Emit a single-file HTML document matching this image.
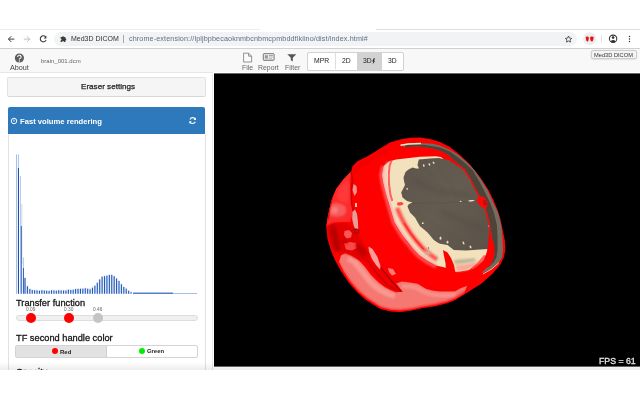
<!DOCTYPE html>
<html>
<head>
<meta charset="utf-8">
<style>
html,body{margin:0;padding:0;}
body{width:640px;height:400px;overflow:hidden;background:#fff;font-family:"Liberation Sans",sans-serif;position:relative;color:#222;}
.abs{position:absolute;}
.t{position:absolute;white-space:nowrap;line-height:1;will-change:transform;}
#topline{left:376px;top:29px;width:264px;height:1px;background:#dedede;}
#topline2{left:0;top:29px;width:260px;height:1px;background:#ececec;}
#chrome{left:0;top:30px;width:640px;height:18px;background:#fff;}
#chromeline{left:0;top:48px;width:640px;height:1px;background:#d0d0d0;}
#omni{left:54px;top:32px;width:523px;height:14px;border-radius:7px;background:#f1f3f4;}
#toolbar{left:0;top:49px;width:640px;height:23px;background:#f8f8f8;}
#toolbarline{left:0;top:72px;width:213px;height:1px;background:#e6e6e6;}
#view{left:214px;top:73px;width:426px;height:294px;background:#000;border-top:1px solid #666;border-bottom:1px solid #666;box-sizing:border-box;}
#leftborder{left:212px;top:74px;width:1px;height:296px;background:#e8e8e8;}
#bottomline{left:0;top:362px;width:640px;height:7.5px;background:linear-gradient(rgba(0,0,0,0),rgba(0,0,0,0.07));}
#bottomwhite{left:0;top:369.5px;width:640px;height:31px;background:#fff;}
#eraser{left:7px;top:77px;width:197px;height:18px;border:1px solid #e2e2e2;border-bottom-color:#d8d8d8;border-radius:2px;background:#f5f5f5;}
#phead{left:8px;top:107px;width:197px;height:27px;background:#2e79bc;border-radius:2px 2px 0 0;}
#pbody{left:8px;top:134px;width:196px;height:240px;border-left:1px solid #e2e2e2;border-right:1px solid #e2e2e2;background:#fff;}
#btngrp{left:307px;top:52px;width:94.5px;height:16.5px;border:1px solid #d2d2d2;border-radius:2px;background:#fff;}
#btnact{left:356.5px;top:52.5px;width:25px;height:17px;background:#d2d2d2;}
.vsep{position:absolute;width:1px;background:#ccc;}
#track{left:16px;top:315px;width:180px;height:4px;border:1px solid #ddd;border-radius:3px;background:#f0f0f0;}
.hd{position:absolute;width:10px;height:10px;border-radius:5px;}
#tfgrp{left:15px;top:345px;width:181px;height:11px;border:1px solid #d4d4d4;border-radius:2px;background:#fff;}
#tfact{left:16px;top:346px;width:90px;height:11px;background:#e2e2e2;border-right:1px solid #d0d0d0;}
</style>
</head>
<body>
<!-- browser chrome -->
<div class="abs" id="topline"></div>
<div class="abs" id="topline2"></div>
<div class="abs" id="chrome"></div>
<div class="abs" id="omni"></div>
<div class="abs" id="chromeline"></div>
<svg class="abs" id="chromeicons" style="left:0;top:29px" width="640" height="20" viewBox="0 0 640 20">
<g fill="none" stroke="#333" stroke-width="0.95" stroke-linecap="butt" stroke-linejoin="miter">
<path d="M14.4 10.1H8.6M11.3 7.2L8.4 10.1L11.3 13"/>
<path d="M23.8 10.1H29.6M26.9 7.2L29.8 10.1L26.9 13" stroke="#bdbdbd"/>
<path d="M45.6 7.9A3 3 0 1 0 46.1 10.9" stroke-width="1.05"/>
</g>
<path d="M46.4 6.7V9.4H43.7Z" fill="#333"/>
<!-- puzzle -->
<path d="M60.6 8.1h1.5a0.9 0.9 0 0 1 1.8 0h1.5v1.5a0.9 0.9 0 0 1 0 1.8v1.5h-1.5a0.9 0.9 0 0 0 -1.8 0h-1.5v-1.5a0.9 0.9 0 0 0 0 -1.8z" fill="#3c3c3c"/>
<!-- star -->
<path d="M568.5 7l0.95 2.1 2.3 0.25-1.7 1.55 0.45 2.25-2-1.15-2 1.15 0.45-2.25-1.7-1.55 2.3-0.25z" fill="none" stroke="#3a3a3a" stroke-width="0.8" stroke-linejoin="miter"/>
<!-- ext icon -->
<circle cx="589.7" cy="9.8" r="6.45" fill="#ededed"/>
<path d="M585.7 8.3q0.2-0.9 1.6-0.8q1.5 0.1 1.5 1.2l-0.3 2.6q-0.3 1.3-1.2 1.2q-0.9-0.1-1.2-1.4z" fill="#e81010"/>
<path d="M590 8.6q0.1-1.1 1.7-1.1q1.8 0 2 1l-0.5 2.4q-0.4 1.6-1.5 1.6q-1 0-1.3-1.4z" fill="#e81010"/>
<rect x="601.2" y="6.2" width="0.8" height="7.2" fill="#dadada"/>
<!-- account -->
<circle cx="613.1" cy="9.8" r="3.7" fill="none" stroke="#333" stroke-width="1.05"/>
<circle cx="613.1" cy="8.6" r="1.3" fill="#333"/>
<path d="M610.5 12.2q2.6-2.3 5.2 0q-2.6 2.4-5.2 0z" fill="#333"/>
<!-- menu -->
<circle cx="629.5" cy="7.4" r="0.75" fill="#333"/><circle cx="629.5" cy="9.9" r="0.75" fill="#333"/><circle cx="629.5" cy="12.4" r="0.75" fill="#333"/>
</svg>
<div class="t" id="sitename" style="left:71px;top:35.32px;font-size:7px;color:#333;">Med3D DICOM</div>
<div class="abs" style="left:123px;top:35px;width:1px;height:8px;background:#aaa;"></div>
<div class="t" id="url" style="left:129px;top:35.16px;font-size:7.2px;letter-spacing:0.123px;color:#5f6f88;">chrome-extension://lpljbpbecaoknmbcnbmcpmbddfikiino/dist/index.html#</div>

<!-- app toolbar -->
<div class="abs" id="toolbar"></div>
<div class="abs" id="toolbarline"></div>
<div class="t" id="about" style="left:10.3px;top:63.61px;font-size:7.2px;color:#444;">About</div>
<div class="t" id="fname" style="left:41.3px;top:58.02px;font-size:6px;color:#666;">brain_001.dcm</div>
<div class="t" id="lfile" style="left:242.2px;top:64.76px;font-size:6.9px;color:#666;">File</div>
<div class="t" id="lreport" style="left:258.4px;top:64.76px;font-size:6.9px;color:#666;">Report</div>
<div class="t" id="lfilter" style="left:284.7px;top:64.76px;font-size:6.9px;color:#666;">Filter</div>
<div class="abs" id="btngrp"></div>
<div class="abs" id="btnact"></div>
<div class="vsep" style="left:335px;top:53px;height:16px;background:#ddd"></div>
<div class="t" id="bmpr" style="left:313.7px;top:58.34px;font-size:6.8px;color:#222;">MPR</div>
<div class="t" id="b2d" style="left:341.8px;top:58.34px;font-size:6.8px;color:#222;">2D</div>
<div class="t" id="b3df" style="left:362.7px;top:58.34px;font-size:6.8px;color:#222;">3D</div>
<div class="t" id="b3d" style="left:387.7px;top:58.34px;font-size:6.8px;color:#222;">3D</div>
<svg class="abs" id="tbicons" style="left:0;top:49px" width="640" height="25" viewBox="0 0 640 25">
<!-- about -->
<circle cx="19.4" cy="9" r="4.6" fill="#5e5e5e"/>
<path d="M17.7 7.9a1.7 1.6 0 1 1 2.6 1.3q-0.9 0.5-0.9 1.3" fill="none" stroke="#f8f8f8" stroke-width="1.15"/>
<circle cx="19.4" cy="12" r="0.65" fill="#f8f8f8"/>
<!-- file -->
<path d="M243.6 4.2h5l3 3v5.8h-8z" fill="#fbfbfb" stroke="#777" stroke-width="0.8" stroke-linejoin="round"/>
<path d="M248.6 4.2v3h3" fill="none" stroke="#777" stroke-width="0.8" stroke-linejoin="round"/>
<!-- report -->
<rect x="263.3" y="4.7" width="10.8" height="6.6" rx="0.6" fill="#f2f2f2" stroke="#666" stroke-width="0.9"/>
<rect x="264.8" y="6.2" width="3.1" height="3.4" fill="#999"/>
<rect x="268.9" y="6.3" width="4" height="0.8" fill="#888"/>
<rect x="268.9" y="7.7" width="4" height="0.7" fill="#aaa"/>
<rect x="268.9" y="9" width="3" height="0.7" fill="#aaa"/>
<rect x="264.6" y="10.2" width="8.4" height="0.5" fill="#bbb"/>
<!-- filter -->
<path d="M287.3 5.2h9l-3.5 3.6v3.6l-2-1.2v-2.4z" fill="#555"/>
<!-- bolt -->
<path d="M373.8 9.3l-1.6 3.2h1.2l-0.9 2.9 2.6-3.7h-1.3l1.3-2.4z" fill="#222"/>
</svg>
<!-- tooltip -->
<div class="abs" id="tip" style="left:591px;top:50px;width:44px;height:7px;border:1px solid #cdcdcd;border-radius:2px;background:#f4f4f4;box-shadow:0 0.5px 1.5px rgba(0,0,0,0.15);"></div>
<div class="t" id="tiptext" style="left:594px;top:52.87px;font-size:5.7px;color:#333;">Med3D DICOM</div>

<!-- left panel -->
<div class="abs" id="leftborder"></div>
<div class="abs" id="eraser"></div>
<div class="t" id="erasertext" style="left:80.5px;top:83.44px;font-size:8.1px;color:#222;-webkit-text-stroke:0.25px #222;">Eraser settings</div>
<div class="abs" id="pbody"></div>
<div class="abs" id="phead"></div>
<div class="t" id="pheadtext" style="left:20px;top:118.12px;font-size:7.65px;color:#fff;font-weight:bold;">Fast volume rendering</div>
<svg class="abs" id="hicons" style="left:8px;top:107px" width="197" height="27" viewBox="8 107 197 27">
<circle cx="14" cy="121" r="2.75" fill="none" stroke="#fff" stroke-width="0.95"/>
<path d="M14 119.6v1.9" stroke="#fff" stroke-width="1" fill="none"/>
<path d="M195.4 119.3A3 3 0 0 0 190 119.4" fill="none" stroke="#fff" stroke-width="1.1"/>
<path d="M189.9 121.9A3 3 0 0 0 195.3 121.8" fill="none" stroke="#fff" stroke-width="1.1"/>
<path d="M196 117.4v2.5h-2.5z" fill="#fff"/>
<path d="M189.3 123.8v-2.5h2.5z" fill="#fff"/>
</svg>
<svg class="abs" id="hist" style="left:8px;top:140px" width="200" height="160" viewBox="0 0 200 160">
<rect x="8.00" y="14.40" width="1.0" height="139.40" fill="#a9c0e6"/>
<rect x="9.90" y="14.40" width="1.0" height="13.60" fill="#a9c0e6"/>
<rect x="9.90" y="28.00" width="1.1" height="125.80" fill="#1d50b4"/>
<rect x="11.90" y="36.00" width="1.0" height="50.00" fill="#b4c6e4"/>
<rect x="13.40" y="64.00" width="0.9" height="60.00" fill="#c8d6ec"/>
<rect x="12.60" y="86.00" width="1.1" height="67.80" fill="#1d50b4"/>
<rect x="14.90" y="117.50" width="1.0" height="10.50" fill="#b4c6e4"/>
<rect x="14.90" y="128.00" width="1.0" height="25.80" fill="#2358b8"/>
<path d="M16.00 137.20h2.0V153.80h-2.0zM18.41 145.48h2.0V153.80h-2.0zM20.82 148.17h2.0V153.80h-2.0zM23.23 149.23h2.0V153.80h-2.0zM25.64 149.33h2.0V153.80h-2.0zM28.05 149.67h2.0V153.80h-2.0zM30.46 150.02h2.0V153.80h-2.0zM32.87 149.44h2.0V153.80h-2.0zM35.28 149.68h2.0V153.80h-2.0zM37.69 149.92h2.0V153.80h-2.0zM40.10 150.16h2.0V153.80h-2.0zM42.51 149.56h2.0V153.80h-2.0zM44.92 149.80h2.0V153.80h-2.0zM47.33 150.04h2.0V153.80h-2.0zM49.74 149.44h2.0V153.80h-2.0zM52.15 149.61h2.0V153.80h-2.0zM54.56 149.71h2.0V153.80h-2.0zM56.97 149.80h2.0V153.80h-2.0zM59.38 149.06h2.0V153.80h-2.0zM61.79 149.11h2.0V153.80h-2.0zM64.20 149.07h2.0V153.80h-2.0zM66.61 148.19h2.0V153.80h-2.0zM69.02 148.09h2.0V153.80h-2.0zM71.43 147.99h2.0V153.80h-2.0zM73.84 147.88h2.0V153.80h-2.0zM76.25 147.46h2.0V153.80h-2.0zM78.66 147.91h2.0V153.80h-2.0zM81.07 148.36h2.0V153.80h-2.0zM83.48 146.87h2.0V153.80h-2.0zM85.89 144.92h2.0V153.80h-2.0zM88.30 142.01h2.0V153.80h-2.0zM90.71 138.71h2.0V153.80h-2.0zM93.12 136.03h2.0V153.80h-2.0zM95.53 135.33h2.0V153.80h-2.0zM97.94 135.07h2.0V153.80h-2.0zM100.35 134.17h2.0V153.80h-2.0zM102.76 134.11h2.0V153.80h-2.0zM105.17 135.53h2.0V153.80h-2.0zM107.58 137.80h2.0V153.80h-2.0zM109.99 140.26h2.0V153.80h-2.0zM112.40 143.57h2.0V153.80h-2.0zM114.81 146.29h2.0V153.80h-2.0zM117.22 147.86h2.0V153.80h-2.0zM119.63 149.89h2.0V153.80h-2.0zM122.04 151.34h2.0V153.80h-2.0z" fill="#c9d8f0" opacity="0.55"/>
<path d="M16.45 138.00h1.1V153.80h-1.1zM18.86 146.28h1.1V153.80h-1.1zM21.27 148.97h1.1V153.80h-1.1zM23.68 150.03h1.1V153.80h-1.1zM26.09 150.13h1.1V153.80h-1.1zM28.50 150.47h1.1V153.80h-1.1zM30.91 150.82h1.1V153.80h-1.1zM33.32 150.24h1.1V153.80h-1.1zM35.73 150.48h1.1V153.80h-1.1zM38.14 150.72h1.1V153.80h-1.1zM40.55 150.96h1.1V153.80h-1.1zM42.96 150.36h1.1V153.80h-1.1zM45.37 150.60h1.1V153.80h-1.1zM47.78 150.84h1.1V153.80h-1.1zM50.19 150.24h1.1V153.80h-1.1zM52.60 150.41h1.1V153.80h-1.1zM55.01 150.51h1.1V153.80h-1.1zM57.42 150.60h1.1V153.80h-1.1zM59.83 149.86h1.1V153.80h-1.1zM62.24 149.91h1.1V153.80h-1.1zM64.65 149.87h1.1V153.80h-1.1zM67.06 148.99h1.1V153.80h-1.1zM69.47 148.89h1.1V153.80h-1.1zM71.88 148.79h1.1V153.80h-1.1zM74.29 148.68h1.1V153.80h-1.1zM76.70 148.26h1.1V153.80h-1.1zM79.11 148.71h1.1V153.80h-1.1zM81.52 149.16h1.1V153.80h-1.1zM83.93 147.67h1.1V153.80h-1.1zM86.34 145.72h1.1V153.80h-1.1zM88.75 142.81h1.1V153.80h-1.1zM91.16 139.51h1.1V153.80h-1.1zM93.57 136.83h1.1V153.80h-1.1zM95.98 136.13h1.1V153.80h-1.1zM98.39 135.87h1.1V153.80h-1.1zM100.80 134.97h1.1V153.80h-1.1zM103.21 134.91h1.1V153.80h-1.1zM105.62 136.33h1.1V153.80h-1.1zM108.03 138.60h1.1V153.80h-1.1zM110.44 141.06h1.1V153.80h-1.1zM112.85 144.37h1.1V153.80h-1.1zM115.26 147.09h1.1V153.80h-1.1zM117.67 148.66h1.1V153.80h-1.1zM120.08 150.69h1.1V153.80h-1.1zM122.49 152.14h1.1V153.80h-1.1z" fill="#2259b9"/>
<rect x="125" y="152.60" width="40" height="1.2" fill="#2a60bd"/>
<rect x="165" y="153.00" width="24" height="0.8" fill="#8fb0e0"/>
</svg>
<div class="t" id="tflabel" style="left:16px;top:298.87px;font-size:9.25px;color:#151515;-webkit-text-stroke:0.3px #151515;">Transfer function</div>
<div class="t" style="left:26px;top:308.2px;font-size:4.8px;color:#666;">0.09</div>
<div class="t" style="left:64.3px;top:308.2px;font-size:4.8px;color:#666;">0.30</div>
<div class="t" style="left:93.2px;top:308.2px;font-size:4.8px;color:#666;">0.46</div>
<div class="abs" id="track"></div>
<div class="hd" style="left:26px;top:313px;background:#f00;"></div>
<div class="hd" style="left:64px;top:313px;background:#f00;"></div>
<div class="hd" style="left:93px;top:313px;background:#c4c4c4;"></div>
<div class="t" id="tf2label" style="left:16px;top:333.97px;font-size:9.25px;color:#151515;-webkit-text-stroke:0.3px #151515;">TF second handle color</div>
<div class="abs" id="tfgrp"></div>
<div class="abs" id="tfact"></div>
<div class="abs" style="left:51.5px;top:348px;width:6px;height:6px;border-radius:3px;background:#f00;"></div>
<div class="t" id="redtxt" style="left:59.7px;top:348.62px;font-size:6px;font-weight:bold;color:#222;">Red</div>
<div class="abs" style="left:139px;top:348px;width:6px;height:6px;border-radius:3px;background:#0e0;"></div>
<div class="t" id="greentxt" style="left:147.3px;top:349.21px;font-size:5.9px;font-weight:bold;color:#222;">Green</div>
<div class="t" id="opac" style="left:16px;top:367.6px;font-size:9.25px;color:#151515;-webkit-text-stroke:0.3px #151515;">Opacity</div>

<!-- 3d view -->
<div class="abs" id="view"></div>
<svg class="abs" id="brain" style="left:214px;top:74px" width="426" height="293" viewBox="214 74 426 293">
<defs>
<filter id="b1" x="-20%" y="-20%" width="140%" height="140%"><feGaussianBlur stdDeviation="0.6"/></filter>
<filter id="b2" x="-20%" y="-20%" width="140%" height="140%"><feGaussianBlur stdDeviation="1.2"/></filter>
<filter id="b3" x="-20%" y="-20%" width="140%" height="140%"><feGaussianBlur stdDeviation="2.2"/></filter>
<clipPath id="sil"><path d="M400 139.4L410 137.8L420 137.5L430 139L440 142L450 147L460 155L470 164.5L476 172L482 180L488.5 190L493.5 200L497.5 210L500 217.5L502.5 228.8L505 241.2L505.3 250L503.8 257.5L500 265L492.5 273.8L481.2 283.8L471.2 290L461.2 296.2L455 300L447.5 303.1L435 306.2L422.5 308.1L411.2 310.6L400 311.9L390 311.2L380 308.8L366.2 300L357.5 292.5L348.8 282.5L341.2 271.2L335 260L331.2 251.2L327.5 238.8L326.2 226.2L327.5 218L329.4 208.8L331.9 198.8L336.2 188.8L343.8 178.8L351.2 171.2L352.5 166.2L357.5 161.2L366.2 156.9L373.8 152.5L382.5 146.9L390 142.5Z"/></clipPath>
<linearGradient id="faceg" x1="0" y1="0" x2="1" y2="1">
<stop offset="0" stop-color="#5d554b"/><stop offset="0.5" stop-color="#645c51"/><stop offset="1" stop-color="#5a5248"/>
</linearGradient>
</defs>
<!-- silhouette -->
<path id="silp" fill="#fe0000" d="M400 139.4L410 137.8L420 137.5L430 139L440 142L450 147L460 155L470 164.5L476 172L482 180L488.5 190L493.5 200L497.5 210L500 217.5L502.5 228.8L505 241.2L505.3 250L503.8 257.5L500 265L492.5 273.8L481.2 283.8L471.2 290L461.2 296.2L455 300L447.5 303.1L435 306.2L422.5 308.1L411.2 310.6L400 311.9L390 311.2L380 308.8L366.2 300L357.5 292.5L348.8 282.5L341.2 271.2L335 260L331.2 251.2L327.5 238.8L326.2 226.2L327.5 218L329.4 208.8L331.9 198.8L336.2 188.8L343.8 178.8L351.2 171.2L352.5 166.2L357.5 161.2L366.2 156.9L373.8 152.5L382.5 146.9L390 142.5Z"/>
<g clip-path="url(#sil)">
<!-- salmon crescent bottom -->
<path fill="#f57872" filter="url(#b1)" d="M345.5 253L352 256L359 260.5L365 267L371 275L378 282L384.5 287L390 290L395.6 292.5L402 291.5L398 287L395.6 283.8L402 281.6L410 282.5L417.5 283.8L422 286.5L426.2 289L432 290.5L439.4 291.4L447 291.6L454.7 291.4L461 288L467 286L464 294L455 299L447 302L435 305L422 307L411 309.5L400 310.5L390 309.8L381 307.5L367.5 299L358.5 291.5L350 281.5L343 270.5L339 262L341 255.5Z"/>
<path fill="none" stroke="#fa9e96" stroke-width="6" filter="url(#b2)" opacity="0.85" d="M348 258L354.5 262L360 268.5L365.5 276L372 283.5L379.5 289.5L387 293.5L395 296"/>
<path fill="none" stroke="#f99690" stroke-width="4.5" filter="url(#b2)" opacity="0.8" d="M402 286L410 286.5L417.5 288L424 292L432 294.5L440 295.5L448 295.5L456 294.5"/>
<path fill="none" stroke="#fe0000" stroke-width="4.5" filter="url(#b2)" opacity="0.75" d="M335 260L341.2 271.2L348.8 282.5L357.5 292.5L366.2 300L380 308.8L390 311.2L400 311.9L411.2 310.6L422.5 308.1L435 306.2L447.5 303.1L455 300L461.2 296.2L471.2 290"/>
<!-- dark red wedge between -->
<path fill="#ee0000" filter="url(#b1)" d="M364 252L373 262L381 268L389 276L397 284.5L403 292L396 291L388 288L381 282.5L374 275L367 266L361 258Z"/>
<path fill="none" stroke="#a40808" stroke-width="1.3" filter="url(#b1)" opacity="0.85" d="M377 263L384 271.5L392 281.5L401 291.5"/>
<path fill="none" stroke="#c00000" stroke-width="1.2" filter="url(#b1)" opacity="0.8" d="M366 258L372 267L380 277L388 285L396 290"/>
<!-- pink wedge -->
<path fill="#fa9c98" filter="url(#b1)" d="M368.5 246.5L372.5 249L377.5 257L380.5 266L380 269.5L376 265L372 259L369 252Z"/>
<path fill="#f77" filter="url(#b1)" d="M388 268L393 269L396 274L392 275.5L389 272Z"/>
<!-- left ear region shading -->
<path fill="#ff2b2b" filter="url(#b1)" d="M351 171L343.8 178.8L336.2 188.8L331.9 198.8L329.4 208.8L327.5 218L326.5 226L334 223L342 222L350 222L353.5 212L351.5 200L350 186L350.5 176Z"/>
<path fill="#f26464" filter="url(#b2)" opacity="0.9" d="M330 206L334 203L340 203.5L345 206L346.5 211L344 215.5L337 217L330.5 216L328.8 211Z"/>
<path fill="#f88" filter="url(#b2)" opacity="0.7" d="M331.5 208L336 206.5L338.5 209L337 213L332 213.5Z"/>
<path fill="#f44" filter="url(#b2)" opacity="0.6" d="M338 190L344 183L348.5 180L349 192L348 203L342 202L337 198Z"/>
<path fill="none" stroke="#c40000" stroke-width="1.5" filter="url(#b1)" opacity="0.9" d="M351 172L352.6 180L351.2 192L351.6 204L353.5 212"/>
<path fill="#e00000" filter="url(#b1)" opacity="0.9" d="M327 212L329 206L331.5 198L335 190L332.5 200L330.5 208L329 218L327.5 222Z"/>
<path fill="#f5908c" filter="url(#b1)" d="M353.5 184L356.5 186L357 192L354.5 196L352.5 190Z"/>
<path fill="#fba" filter="url(#b1)" d="M355 203L357 203L357 207L355 207Z"/>
<path fill="#e89e98" filter="url(#b1)" d="M352.5 212L355 209.5L357 214L358 222L358.2 229L356 231.5L353.8 226L352.2 219Z"/>
<!-- lower-left folds -->
<path fill="#e20000" filter="url(#b2)" d="M326.5 226L334 223L344 223L352 226L358 234L364 244L370 256L364 262L356 258L348 254L340 252L333 252L329 242Z"/>
<path fill="#b40000" filter="url(#b2)" opacity="0.85" d="M331 224L335 226L338 236L340 246L339.5 254L335 250L332 240L330 232Z"/>
<path fill="#f66" filter="url(#b1)" opacity="0.85" d="M344.5 231L349 230L352 233L351 237.5L346.5 238.5L344 235Z"/>
<path fill="#f55" filter="url(#b1)" opacity="0.85" d="M344 243.5L350 242L356 243L357 248L352 250.5L346 249.5Z"/>
<path fill="#c00000" filter="url(#b2)" opacity="0.85" d="M355 244L361 245L366 250L367.5 256L362 256L357 251Z"/>
<path fill="#c80000" filter="url(#b2)" opacity="0.8" d="M340 238L346 240L348 244L342 243Z"/>
<path fill="#9c1010" filter="url(#b1)" d="M353.6 229.5L356 228.2L359 229.5L359.8 232.5L357.5 234.6L354.6 233.6Z"/>
<path fill="#f00000" d="M355.3 231.2a1.5 1.5 0 1 0 3 0a1.5 1.5 0 1 0 -3 0"/>
<path fill="#ec0000" filter="url(#b2)" opacity="0.7" d="M352 170L362 162L374 155L386 149L388 152L376 158L364 165L355 173Z"/>
<!-- cream rim -->
<path fill="#f2e1bc" d="M396.2 159.4L420 156.8L436 156.3L441 157L446 161L470 180L487 240L487.5 253L482.8 261.7L475 265.6L468.8 270L460 271.5L453 272L447 268L436 265.6L427 260.5L419 255L413 248.5L408 242L403 236L398.5 229L394.5 222L392 214L390 207L388 200L386.5 195L384.5 188L383.2 182.5L382 175L383.5 166.2L389 161.5Z"/>
<!-- soft pink transition outside cream rim -->
<path fill="none" stroke="#f66" stroke-width="3.4" filter="url(#b2)" opacity="0.8" d="M383 166L381 175L382.2 183L385.5 196L389 208L393.5 223L402 237L412 249.5L418 256L426.5 262L436 266.8"/>
<path fill="none" stroke="#fbb" stroke-width="1.8" filter="url(#b1)" opacity="0.8" d="M384.8 167L383.4 175L384.6 183L387.9 195.5L391.3 207L395.8 222L404.5 235.5L414.4 248L420.2 254L428 259.5L436 263.5"/>
<!-- red streaks inside cream -->
<path fill="none" stroke="#f9c4b4" stroke-width="3" filter="url(#b2)" opacity="0.7" d="M388.5 162.5L386.2 167L385.3 175L386.2 184L388 193L390 200"/>
<path fill="none" stroke="#f55" stroke-width="2" filter="url(#b1)" opacity="0.9" d="M391.5 160.5L389.6 166L388.8 174L389 184L390.3 194L392.3 201"/>
<path fill="none" stroke="#f44" stroke-width="4.4" filter="url(#b2)" opacity="0.9" d="M397 208L400.5 216L404 223L410 232.5L416.5 241L423.5 249L430 254.5L437 259.5"/>
<path fill="none" stroke="#f22" stroke-width="1.6" filter="url(#b1)" opacity="0.8" d="M404 223L410 232.5L416.5 241L423.5 249"/>
<path fill="#f33" filter="url(#b1)" opacity="0.9" d="M397.5 202.6L401.5 202L403.5 203.2L402.5 205L398.8 205.8L396.8 204.4Z"/>
<path fill="#fe0000" filter="url(#b1)" d="M443 250L447.5 252.5L451 258L454 265L455.5 273L446 271L445.5 263L444 256Z"/>
<path fill="#f8a094" filter="url(#b2)" opacity="0.85" d="M455 265L464 264.5L473 263L478 261L474 266.5L466 270.5L457 271.5Z"/>
<path fill="#f44" filter="url(#b1)" opacity="0.8" d="M478 262L484 255L486.5 256L482 263.5L474 269L470 269.5Z"/>
<path fill="#b3a991" filter="url(#b2)" opacity="0.85" d="M454 260.2L461 259.6L468 259L475 258.2L475.5 261L468 262.6L460.5 263.4L454.5 263.6Z"/>
<path fill="#cbc1a8" filter="url(#b2)" opacity="0.8" d="M424.5 251L429 250.5L431.5 253L429.5 255.2L425.5 254.5Z"/>
<!-- gray face -->
<path fill="url(#faceg)" d="M418.8 159.4L430 158.4L438.8 158L448.8 160L457.5 166L463.8 170L470 180L475 190L478.8 197.5L485 210L487.5 220L488.8 225L489.4 237.5L488 249L480 249.4L466.2 250.6L453.8 250L450 247L447.5 245L440 243.8L437.5 242.5L433.8 240L430.5 236L427.5 232.5L424 229.5L420 226.2L417.5 222L415 217.5L412.5 215L410 212.5L408.5 209L407.5 206.2L409 204L412.5 202.5L407 201L402.5 197.5L401.2 192.5L403 189L405 185L404 181L403.5 177.5L405.5 172L408.5 169.5L412.5 167.5L416 168.5L419 168.5L417.5 165Z"/>
<!-- face texture -->
<path fill="none" stroke="#524a40" stroke-width="0.9" filter="url(#b1)" opacity="0.3" d="M412 203L440 203.2L462 202L476 200.8"/>
<path fill="none" stroke="#6e665a" stroke-width="3" filter="url(#b3)" opacity="0.3" d="M430 165L445 185L452 198"/>
<path fill="none" stroke="#6e665a" stroke-width="3" filter="url(#b3)" opacity="0.28" d="M420 210L445 225L470 240"/>
<path fill="none" stroke="#4f473d" stroke-width="3" filter="url(#b3)" opacity="0.4" d="M415 180L440 192L470 195"/>
<path fill="none" stroke="#4f473d" stroke-width="3" filter="url(#b3)" opacity="0.4" d="M440 210L465 222L484 230"/>
<!-- cream dots -->
<g fill="#efdfbc">
<ellipse cx="423.8" cy="165.6" rx="0.8" ry="1.3" transform="rotate(-15 423.8 165.6)"/>
<ellipse cx="429.4" cy="164.4" rx="0.8" ry="1.3" transform="rotate(-25 429.4 164.4)"/>
<ellipse cx="433.6" cy="162.8" rx="0.8" ry="1.3" transform="rotate(-30 433.6 162.8)"/>
<circle cx="407.2" cy="188.8" r="0.9"/>
<circle cx="422.8" cy="223.2" r="0.9"/>
<ellipse cx="440.5" cy="238.2" rx="0.9" ry="1.6"/>
<ellipse cx="447.5" cy="242.2" rx="0.9" ry="1.4"/>
<ellipse cx="463.5" cy="243" rx="0.8" ry="1.6" transform="rotate(-25 463.5 243)"/>
<ellipse cx="470.5" cy="247" rx="0.8" ry="1.5" transform="rotate(-30 470.5 247)"/>
<circle cx="489" cy="226" r="0.7"/>
<ellipse cx="460.6" cy="201.3" rx="1" ry="0.6"/>
<ellipse cx="471.5" cy="200.8" rx="3.2" ry="0.7" transform="rotate(-4 471.5 200.8)"/>
</g>
<circle cx="428.5" cy="248" r="0.7" fill="#6a6250"/>
<!-- skull band (top + right) -->
<path fill="#746c60" d="M401 144.6L410 143.6L420 143.1L432.5 143.8L440 145.6L450 150L457.5 154.4L466 161.5L474.4 170L481 179.5L487.5 190L493.1 202.5L498.1 212.5L501.2 225L502.5 237.5L503 250L502 257.5L498.8 262.5L492 268.5L481 273.5L486 268L490 266L493 260L494.5 255L493.8 250L491.9 237.5L490 225L486.9 212.5L483.8 202.5L476.2 190L471 179.5L465.6 170L461.5 166.5L457.5 163.8L448.8 155.5L440 150.6L430 148L420 146.6L410 146.8L404 147.2Z"/>
<path fill="#4e4339" d="M406 145.6L410 144.8L420 144.5L430 145.8L440 147.5L450 151.5L457.5 156.9L465 163L472.5 170L478.5 180L483.8 190L490 202.5L493.8 212.5L496.9 225L497.5 237.5L497.5 250L496.5 257L494 262L489 267L486 268L490 266L493 260L494.5 255L493.8 250L491.9 237.5L490 225L486.9 212.5L483.8 202.5L476.2 190L471 179.5L465.6 170L461.5 166.5L457.5 163.8L448.8 155.5L440 150.6L430 148L420 146.6L410 146.8L404 147.2Z"/>
<!-- cream highlights on band -->
<path fill="none" stroke="#f3e4c4" stroke-width="1.5" d="M400.5 145.2L408 144L421 143.4"/>
<path fill="none" stroke="#e8d8b4" stroke-width="0.9" d="M498.8 262.8L492 268.8L483 274"/>
<!-- inner red band under top skull band -->
<path fill="#fe0000" d="M396 150L410 147.6L420 147.5L430 148.6L438.8 150.6L447 154.5L453 159.5L455.5 162.8L450 159.5L445 157.2L440 156.2L430 155.6L420 155.6L408 156.6L398 158.5Z"/>
<!-- thin red line along face right edge -->
<path fill="none" stroke="#f01010" stroke-width="1.2" d="M457 164.5L464 170L470.5 180L475.5 190L479.5 197.5L485.8 210L488.3 220L489.6 225L490.3 237.5L489 249"/>
<!-- red gap between face and band lower right -->
<path fill="#fe0000" d="M489.2 232L491 238L493.4 242L494.8 250L493 259L489.5 265L484 270L478 274L470 272L478 266L484 260L487.5 250Z"/>
<!-- red blob -->
<path fill="#fc0808" d="M476 200.2L479 197.2L482.5 196.2L485.5 198.5L487.5 202.5L487.2 206.5L484.8 209L481.8 207.5L479.2 204.5Z"/>
<path fill="#c40808" filter="url(#b1)" d="M483 199.5L486 200.5L487 204L485 206L483 203.5Z"/>
</g>

</svg>
<div class="t" id="fps" style="left:598.7px;top:357.34px;font-size:8.75px;color:#e6e6e6;-webkit-text-stroke:0.3px #e6e6e6;">FPS = 61</div>

<div class="abs" id="bottomline"></div>
<div class="abs" id="bottomwhite"></div>
</body>
</html>
